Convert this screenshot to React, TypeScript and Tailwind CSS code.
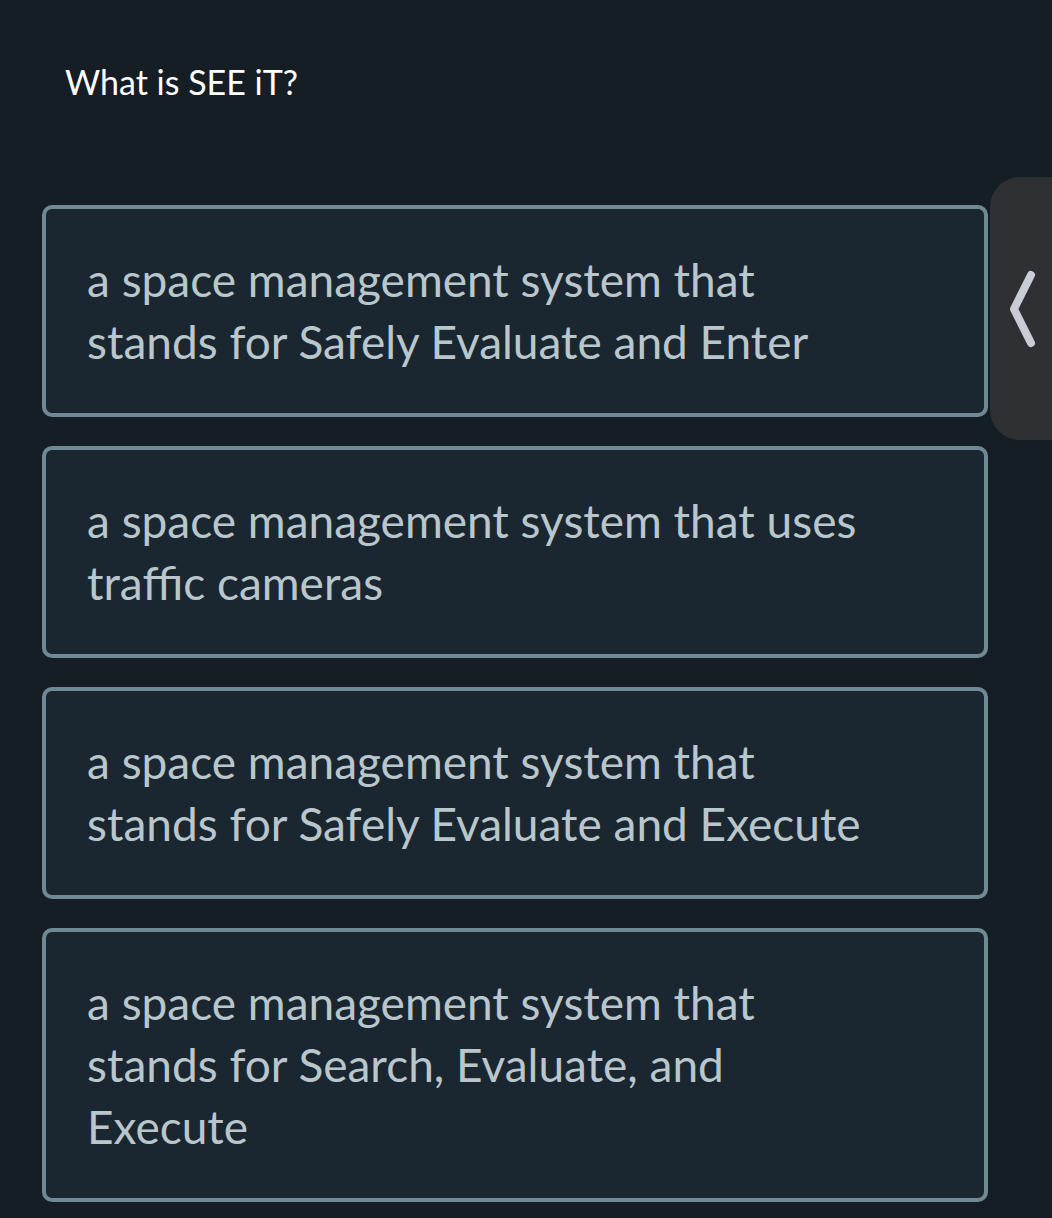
const answers = [
  'a space management system that stands for Safely Evaluate and Enter',
  'a space management system that uses traffic cameras',
  'a space management system that stands for Safely Evaluate and Execute',
  'a space management system that stands for Search, Evaluate, and Execute',
];

const App = () => {
  return (
    <div
      className="relative min-h-[1218px] w-full overflow-hidden bg-[#161e25]"
      style={{ fontFamily: 'Lato, "Open Sans", sans-serif' }}
    >
      <div className="px-[42px] pt-[59px]">
        <h1 className="pl-[23px] text-[34px] leading-[46px] text-white">What is SEE iT?</h1>
        <div className="mt-[100px] flex w-[946px] flex-col gap-[29px]">
          {answers.map((a) => (
            <button
              key={a}
              type="button"
              className="rounded-[10px] border-4 border-[#6f8a93] bg-[#1b2730] py-[40px] pl-[41px] text-left text-[46px] leading-[62px] text-[#b9c6cc]"
            >
              <span className="block max-w-[790px]">{a}</span>
            </button>
          ))}
        </div>
      </div>
      <div className="absolute left-[990px] top-[177px] flex h-[263px] w-[80px] items-center rounded-l-[30px] bg-[#2e3033] pl-[18px]">
        <svg width="30" height="80" viewBox="0 0 30 80" fill="none">
          <path
            d="M23 6 L6 40 L23 74"
            stroke="#c9ccd4"
            strokeWidth="8"
            strokeLinecap="round"
            strokeLinejoin="round"
          />
        </svg>
      </div>
    </div>
  );
};

export default App;
